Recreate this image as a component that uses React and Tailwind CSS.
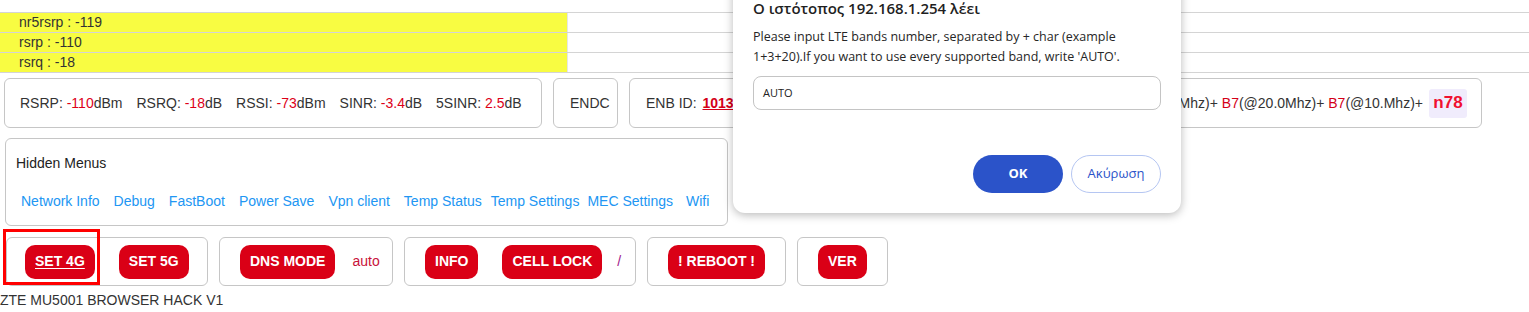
import React from 'react'

const SIGNALS = [
  { label: 'nr5rsrp', value: '-119' },
  { label: 'rsrp', value: '-110' },
  { label: 'rsrq', value: '-18' },
]

const STATS = [
  { label: 'RSRP:', value: '-110', unit: 'dBm' },
  { label: 'RSRQ:', value: '-18', unit: 'dB' },
  { label: 'RSSI:', value: '-73', unit: 'dBm' },
  { label: 'SINR:', value: '-3.4', unit: 'dB' },
  { label: '5SINR:', value: '2.5', unit: 'dB' },
]

const LINKS = [
  { name: 'Network Info', ml: 'ml-0' },
  { name: 'Debug', ml: 'ml-[14px]' },
  { name: 'FastBoot', ml: 'ml-[14px]' },
  { name: 'Power Save', ml: 'ml-[14px]' },
  { name: 'Vpn client', ml: 'ml-[14px]' },
  { name: 'Temp Status', ml: 'ml-[14px]' },
  { name: 'Temp Settings', ml: 'ml-[9px]' },
  { name: 'MEC Settings', ml: 'ml-[8px]' },
  { name: 'Wifi', ml: 'ml-[13px]' },
]

function RedButton({ children, underline }) {
  return (
    <button
      className={`h-[34px] px-[10px] rounded-[10px] bg-[#da0016] text-white text-[14px] font-bold whitespace-nowrap ${underline ? 'underline underline-offset-2' : ''}`}
    >
      {children}
    </button>
  )
}

function Box({ className = '', children }) {
  return (
    <div className={`border border-[#c6c6c6] rounded-[6px] flex items-center ${className}`}>
      {children}
    </div>
  )
}

function Dialog() {
  return (
    <div className="absolute left-[733px] top-[-20px] w-[448px] h-[233px] bg-white rounded-[12px] shadow-[0_2px_10px_rgba(0,0,0,0.28)] px-[20px] pt-[18px] font-['Open_Sans','Noto_Sans',sans-serif] text-[#1f1f1f]">
      <div className="text-[15px] leading-[20px] font-semibold">Ο ιστότοπος 192.168.1.254 λέει</div>
      <p className="mt-[9px] text-[12.5px] leading-[20px] text-[#262626]">
        Please input LTE bands number, separated by + char (example
        <br />
        1+3+20).If you want to use every supported band, write 'AUTO'.
      </p>
      <div className="mt-[9px] h-[34px] border border-[#c4c4c4] rounded-[8px] flex items-center px-[9px] text-[11px] text-[#222]">
        AUTO
      </div>
      <div className="mt-[45px] flex justify-end gap-[8px]">
        <button className="w-[90px] h-[38px] rounded-full bg-[#2b53c9] text-white text-[13px] font-bold">OK</button>
        <button className="w-[90px] h-[38px] rounded-full border border-[#b5c6f2] text-[#2b53c9] text-[13px] font-medium">Ακύρωση</button>
      </div>
    </div>
  )
}

export default function App() {
  return (
    <div className="relative w-[1529px] h-[312px] overflow-hidden bg-white font-['Liberation_Sans',Arial,sans-serif] text-[14px] text-[#333]">
      <div className="pt-[12px]">
        {SIGNALS.map((s, i) => (
          <div key={s.label} className={`flex h-[20px] border-b border-[#d4d4d4] ${i === 0 ? 'h-[21px] border-t' : ''}`}>
            <div className="w-[568px] bg-[#f8fc42] pl-[19px] leading-[19px] border-r border-[#e6e6e6]">
              {s.label} : {s.value}
            </div>
            <div className="flex-1" />
          </div>
        ))}
      </div>

      <div className="flex mt-[5px] ml-[4px] gap-[11px]">
        <Box className="w-[538px] h-[50px] pl-[15px] gap-[14px]">
          {STATS.map((s) => (
            <span key={s.label} className="whitespace-nowrap">
              {s.label} <span className="text-[#dd0018]">{s.value}</span>{s.unit}
            </span>
          ))}
        </Box>
        <Box className="w-[65px] h-[50px] pl-[16px]">ENDC</Box>
        <Box className="w-[853px] h-[50px] pl-[16px] pr-[14px] justify-between">
          <span className="whitespace-nowrap">
            ENB ID: <span className="ml-[2px] text-[#d40018] font-bold underline">1013</span>
          </span>
          <span className="flex items-center whitespace-nowrap">
            <span>
              <span className="text-[#d40018]">B3</span>(@20.0Mhz)+ <span className="text-[#d40018]">B7</span>(@20.0Mhz)+ <span className="text-[#d40018]">B7</span>(@10.Mhz)+
            </span>
            <span className="ml-[6px] w-[38px] h-[29px] rounded-[3px] bg-[#f0ecfc] text-[#f01030] font-bold text-[17px] flex items-center justify-center">
              n78
            </span>
          </span>
        </Box>
      </div>

      <div className="mt-[10px] ml-[5px] w-[723px] h-[88px] border border-[#c6c6c6] rounded-[6px] pt-[16px]">
        <div className="pl-[10px] leading-[16px] text-[#222]">Hidden Menus</div>
        <div className="mt-[22px] pl-[15px] flex leading-[16px] text-[#2196f3] whitespace-nowrap">
          {LINKS.map((l) => (
            <span key={l.name} className={l.ml}>{l.name}</span>
          ))}
        </div>
      </div>

      <div className="flex mt-[11px] ml-[6px] gap-[11px]">
        <div className="relative">
          <Box className="w-[202px] h-[49px] pl-[18px] gap-[24px]">
            <RedButton underline>SET 4G</RedButton>
            <RedButton>SET 5G</RedButton>
          </Box>
          <div className="absolute left-[-3px] top-[-8px] w-[97px] h-[56px] border-[3px] border-[#ff0000]" />
        </div>
        <Box className="w-[174px] h-[49px] pl-[20px] gap-[17px]">
          <RedButton>DNS MODE</RedButton>
          <span className="text-[#c8123a]">auto</span>
        </Box>
        <Box className="w-[232px] h-[49px] pl-[20px]">
          <RedButton>INFO</RedButton>
          <span className="ml-[24px]"><RedButton>CELL LOCK</RedButton></span>
          <span className="ml-[15px] text-[#a0208a]">/</span>
        </Box>
        <Box className="w-[139px] h-[49px] pl-[20px]">
          <RedButton>! REBOOT !</RedButton>
        </Box>
        <Box className="w-[91px] h-[49px] pl-[20px]">
          <RedButton>VER</RedButton>
        </Box>
      </div>

      <div className="mt-[6px] leading-[16px] text-[#333]">ZTE MU5001 BROWSER HACK V1</div>

      <Dialog />
    </div>
  )
}
